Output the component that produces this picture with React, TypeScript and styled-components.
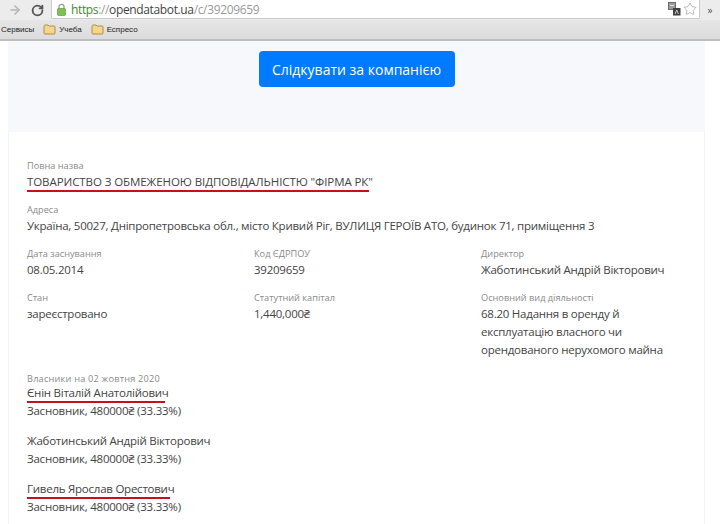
import styled, { createGlobalStyle } from "styled-components";
import { ArrowRight, RotateCw, Star } from "lucide-react";

const GlobalStyle = createGlobalStyle`
  html, body {
    margin: 0;
    padding: 0;
    background: #fff;
    overflow: hidden;
  }
`;

const fields = [
  [
    { label: "Дата заснування", value: ["08.05.2014"] },
    { label: "Код ЄДРПОУ", value: ["39209659"] },
    { label: "Директор", value: ["Жаботинський Андрій Вікторович"] },
  ],
  [
    { label: "Стан", value: ["зареєстровано"] },
    { label: "Статутний капітал", value: ["1,440,000₴"] },
    {
      label: "Основний вид діяльності",
      value: [
        "68.20 Надання в оренду й",
        "експлуатацію власного чи",
        "орендованого нерухомого майна",
      ],
    },
  ],
];

const owners = [
  { name: "Єнін Віталій Анатолійович", marked: true },
  { name: "Жаботинський Андрій Вікторович", marked: false },
  { name: "Гивель Ярослав Орестович", marked: true },
];

const FolderIcon = () => (
  <svg width="13" height="11" viewBox="0 0 13 11">
    <path
      d="M1 2.5 C1 1.5 1.5 1 2.5 1 H5 L6 2 H11 C11.6 2 12 2.4 12 3 V9 C12 9.6 11.6 10 11 10 H2 C1.4 10 1 9.6 1 9 Z"
      fill="#f6d68c"
      stroke="#a8863c"
      strokeWidth="0.9"
    />
  </svg>
);

const LockIcon = () => (
  <svg width="9" height="13" viewBox="0 0 9 13">
    <path d="M2 6 V3.6 C2 0.6 7 0.6 7 3.6 V6" fill="none" stroke="#9a9a9a" strokeWidth="1.3" />
    <rect x="0.5" y="5.5" width="8" height="7" rx="1" fill="#7fbf55" stroke="#5f9c3c" strokeWidth="0.7" />
  </svg>
);

const TranslateIcon = () => (
  <svg width="13" height="14" viewBox="0 0 13 14">
    <rect x="0.5" y="0.5" width="7" height="7" fill="#9b9b9b" stroke="#555" strokeWidth="0.8" />
    <rect x="5" y="6" width="7.5" height="7.5" fill="#3f3f3f" />
    <path d="M7 12 L8.7 8 L10.4 12" fill="none" stroke="#ddd" strokeWidth="0.9" />
    <path d="M2.2 3.5 H5.8" stroke="#eee" strokeWidth="0.9" />
  </svg>
);

const App = () => {
  return (
    <Window>
      <GlobalStyle />
      <Toolbar>
        <BackArrow>
          <ArrowRight size={14} strokeWidth={2.6} color="#b5b5b5" />
        </BackArrow>
        <ReloadButton>
          <RotateCw size={13} strokeWidth={3.4} color="#555" />
        </ReloadButton>
        <AddressBar>
          <LockIcon />
          <Url>
            <Scheme>https</Scheme>
            <Faint>://</Faint>
            <Host>opendatabot.ua</Host>
            <Faint>/c/39209659</Faint>
          </Url>
          <AddressIcons>
            <TranslateIcon />
            <Star size={14} strokeWidth={1} color="#8a8a8a" />
          </AddressIcons>
        </AddressBar>
        <MoreButton>»</MoreButton>
      </Toolbar>
      <Bookmarks>
        <Bookmark>Сервисы</Bookmark>
        <Bookmark>
          <FolderIcon />
          Учеба
        </Bookmark>
        <Bookmark>
          <FolderIcon />
          Еспресо
        </Bookmark>
      </Bookmarks>
      <Page>
        <ActionPanel>
          <FollowButton>Слідкувати за компанією</FollowButton>
        </ActionPanel>
        <Details>
          <Field>
            <Label>Повна назва</Label>
            <Value>
              <Marked $wide>ТОВАРИСТВО З ОБМЕЖЕНОЮ ВІДПОВІДАЛЬНІСТЮ "ФІРМА РК"</Marked>
            </Value>
          </Field>
          <Field>
            <Label>Адреса</Label>
            <Value>
              Україна, 50027, Дніпропетровська обл., місто Кривий Ріг, ВУЛИЦЯ ГЕРОЇВ АТО, будинок 71,
              приміщення 3
            </Value>
          </Field>
          {fields.map((row) => (
            <FieldRow key={row[0].label}>
              {row.map((field) => (
                <Field key={field.label}>
                  <Label>{field.label}</Label>
                  {field.value.map((line) => (
                    <Value key={line}>{line}</Value>
                  ))}
                </Field>
              ))}
            </FieldRow>
          ))}
          <Owners>
            <OwnersLabel>Власники на 02 жовтня 2020</OwnersLabel>
            {owners.map((owner) => (
              <Owner key={owner.name}>
                <Value>{owner.marked ? <Marked>{owner.name}</Marked> : owner.name}</Value>
                <Value>Засновник, 480000₴ (33.33%)</Value>
              </Owner>
            ))}
          </Owners>
        </Details>
      </Page>
    </Window>
  );
};

const Window = styled.div`
  width: 720px;
  height: 524px;
  overflow: hidden;
  font-family: "Open Sans", "Noto Sans", sans-serif;
  color: #333;
`;

const Toolbar = styled.div`
  display: flex;
  align-items: center;
  height: 20px;
  background: #ececec;
`;

const BackArrow = styled.div`
  display: flex;
  width: 30px;
  padding-left: 8px;
  box-sizing: border-box;
`;

const ReloadButton = styled.div`
  display: flex;
  width: 21px;
  padding-left: 1px;
  box-sizing: border-box;
`;

const AddressBar = styled.div`
  display: flex;
  flex: 1;
  align-items: center;
  height: 19px;
  margin-bottom: 1px;
  padding: 0 2px 0 5px;
  gap: 5px;
  box-sizing: border-box;
  background: #fff;
  border: 1px solid #c9c9c9;
  border-top: none;
  border-radius: 0 0 2px 2px;
`;

const Url = styled.div`
  flex: 1;
  font-size: 12px;
  letter-spacing: -0.36px;
  white-space: nowrap;
`;

const Scheme = styled.span`
  color: #3f8a2e;
`;

const Faint = styled.span`
  color: #9a9a9a;
`;

const Host = styled.span`
  color: #444;
`;

const AddressIcons = styled.div`
  display: flex;
  align-items: center;
  gap: 2px;
`;

const MoreButton = styled.div`
  width: 20px;
  font-size: 10px;
  text-align: center;
  color: #555;
`;

const Bookmarks = styled.div`
  display: flex;
  align-items: center;
  gap: 9px;
  height: 21px;
  padding-left: 1px;
  box-sizing: border-box;
  background: linear-gradient(#e6e6e6, #dcdcdc);
  border-bottom: 2px solid #bdbdbd;
`;

const Bookmark = styled.div`
  display: flex;
  align-items: center;
  gap: 3px;
  font-family: "Liberation Sans", sans-serif;
  font-size: 8px;
  color: #222;
`;

const Page = styled.div`
  width: 697px;
  margin-left: 8px;
`;

const ActionPanel = styled.div`
  display: flex;
  justify-content: center;
  height: 91px;
  padding-top: 10px;
  box-sizing: border-box;
  background: #f7f8fb;
`;

const FollowButton = styled.button`
  width: 196px;
  height: 36px;
  padding: 0;
  border: none;
  border-radius: 4px;
  background: #007bff;
  color: #fff;
  font-family: inherit;
  font-size: 14px;
`;

const Details = styled.div`
  display: flex;
  flex-direction: column;
  gap: 11px;
  padding: 26px 18px 0;
  border-left: 1px solid #f3f4f7;
  border-right: 1px solid #f3f4f7;
`;

const Field = styled.div`
  display: flex;
  flex-direction: column;
`;

const FieldRow = styled.div`
  display: grid;
  grid-template-columns: repeat(3, 227px);
`;

const Label = styled.div`
  height: 15px;
  font-size: 9.2px;
  line-height: 15px;
  color: #8a8a8a;
`;

const OwnersLabel = styled(Label)`
  height: 13px;
  letter-spacing: 0.2px;
`;

const Value = styled.div`
  height: 18px;
  font-size: 11.5px;
  letter-spacing: -0.24px;
  line-height: 18px;
  color: #444;
  white-space: nowrap;
`;

const Marked = styled.span<{ $wide?: boolean }>`
  position: relative;
  display: inline-block;
  letter-spacing: ${({ $wide }) => ($wide ? "-0.08px" : "inherit")};

  &::after {
    content: "";
    position: absolute;
    left: 0;
    right: 4px;
    bottom: -1px;
    height: 2px;
    background: #c8101c;
  }
`;

const Owners = styled.div`
  display: flex;
  flex-direction: column;
  margin-top: 1px;
`;

const Owner = styled.div`
  display: flex;
  flex-direction: column;
  margin-bottom: 12px;
`;

export default App;
